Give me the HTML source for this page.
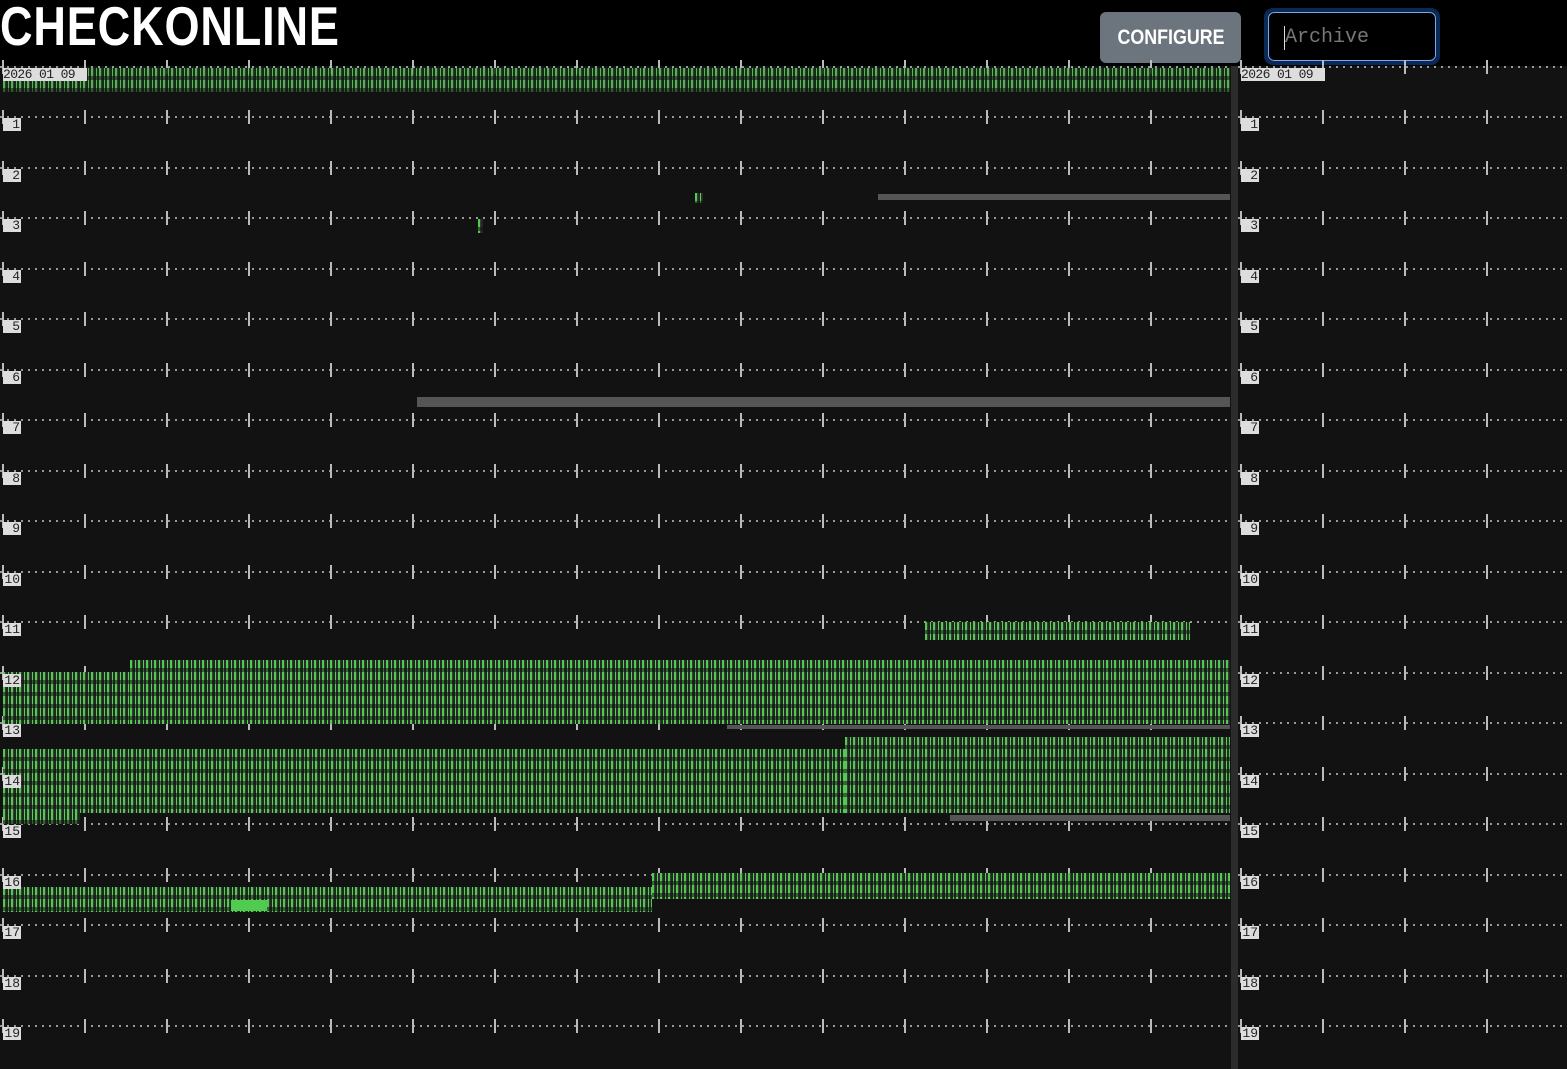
<!DOCTYPE html>
<html><head><meta charset="utf-8"><style>
*{margin:0;padding:0;box-sizing:border-box}
body{width:1567px;height:1069px;background:#000;position:relative;overflow:hidden;font-family:"Liberation Mono",monospace}
#title{position:absolute;left:0;top:-6px;font:bold 55px "Liberation Sans",sans-serif;color:#fff;transform:scaleX(0.82);transform-origin:0 0;letter-spacing:1px}
#cfg{position:absolute;left:1100px;top:12px;width:141px;height:51px;background:#6c757d;border-radius:6px;color:#fff;font:bold 21px "Liberation Sans",sans-serif;text-align:center;line-height:51px}
#cfg span{display:inline-block;transform:scaleX(0.85)}
#arc{position:absolute;left:1264px;top:8px;width:176px;height:57px;border:4px solid #0a2a55;border-radius:9px}
#arc div{position:absolute;inset:0;border:1.5px solid #7aa7ee;border-radius:6px;background:#000;color:#777;font:20px "Liberation Mono",monospace;padding:13px 0 0 16px}
#arc span{position:absolute;left:16px;top:14px;width:1px;height:24px;background:#ddd}
#L{position:absolute;left:0;top:66px;width:1231px;height:1003px;background:#121212}
#D{position:absolute;left:1231px;top:66px;width:7px;height:1003px;background:#2c2c2c}
#R{position:absolute;left:1238px;top:66px;width:329px;height:1003px;background:#121212}
.r{position:absolute;left:0;width:100%;height:14px;
background:linear-gradient(90deg,#bbb 0 2px,transparent 2px) 2px 0/82px 14px repeat-x,
linear-gradient(90deg,#999 0 2px,transparent 2px) 0 6px/7px 2px repeat-x}
.lb{position:absolute;left:3px;width:18px;height:13px;background:#ddd;color:#222;font-size:13px;line-height:13px;text-align:right;padding-right:1px}
.dt{position:absolute;left:3px;top:2px;width:84px;height:13px;background:#ddd;color:#222;font-size:13px;line-height:13px;white-space:nowrap;letter-spacing:-0.6px}
.g{position:absolute;background:
linear-gradient(180deg,transparent 0 8px,rgba(18,18,18,.55) 8px 12px) 0 0/100% 12px,
repeating-linear-gradient(90deg,#4fcc4f 0 2px,#3a3a3a 2px 3px,#1d2a1d 3px 5px,#55d055 5px 6px,#2a2a2a 6px 8px)}
.gb{position:absolute;background:#555}
</style></head><body>
<div id="title">CHECKONLINE</div>
<div id="cfg"><span>CONFIGURE</span></div>
<div id="arc"><div>Archive</div><span></span></div>
<div id="L">
<div class="r" style="top:-6px"></div>
<div class="r" style="top:44px"></div><div class="r" style="top:95px"></div><div class="r" style="top:145px"></div><div class="r" style="top:196px"></div><div class="r" style="top:246px"></div><div class="r" style="top:297px"></div><div class="r" style="top:347px"></div><div class="r" style="top:398px"></div><div class="r" style="top:448px"></div><div class="r" style="top:499px"></div><div class="r" style="top:549px"></div><div class="r" style="top:600px"></div><div class="r" style="top:650px"></div><div class="r" style="top:701px"></div><div class="r" style="top:751px"></div><div class="r" style="top:802px"></div><div class="r" style="top:852px"></div><div class="r" style="top:903px"></div><div class="r" style="top:953px"></div>
<div class="g" style="left:3px;top:2px;width:1227px;height:24px;opacity:.9"></div>
<div class="gb" style="left:878px;top:128px;width:352px;height:6px"></div>
<div class="gb" style="left:417px;top:331px;width:813px;height:10px"></div>
<div class="gb" style="left:727px;top:659px;width:503px;height:4px"></div>
<div class="gb" style="left:950px;top:749px;width:280px;height:6px"></div>
<div class="g" style="left:478px;top:153px;width:5px;height:14px"></div>
<div class="g" style="left:695px;top:127px;width:8px;height:10px"></div>
<div class="g" style="left:925px;top:556px;width:265px;height:18px"></div>
<div class="g" style="left:130px;top:594px;width:1100px;height:64px"></div>
<div class="g" style="left:3px;top:606px;width:127px;height:52px"></div>
<div class="g" style="left:845px;top:671px;width:385px;height:76px"></div>
<div class="g" style="left:3px;top:683px;width:842px;height:64px"></div>
<div class="g" style="left:3px;top:746px;width:77px;height:12px"></div>
<div class="g" style="left:652px;top:807px;width:578px;height:26px"></div>
<div class="g" style="left:3px;top:821px;width:649px;height:25px"></div>
<div style="position:absolute;left:231px;top:834px;width:36px;height:11px;background:#4fcc4f"></div>
<div class="dt">2026 01 09</div>
<div class="lb" style="top:52px">1</div><div class="lb" style="top:103px">2</div><div class="lb" style="top:153px">3</div><div class="lb" style="top:204px">4</div><div class="lb" style="top:254px">5</div><div class="lb" style="top:305px">6</div><div class="lb" style="top:355px">7</div><div class="lb" style="top:406px">8</div><div class="lb" style="top:456px">9</div><div class="lb" style="top:507px">10</div><div class="lb" style="top:557px">11</div><div class="lb" style="top:608px">12</div><div class="lb" style="top:658px">13</div><div class="lb" style="top:709px">14</div><div class="lb" style="top:759px">15</div><div class="lb" style="top:810px">16</div><div class="lb" style="top:860px">17</div><div class="lb" style="top:911px">18</div><div class="lb" style="top:961px">19</div>
</div>
<div id="D"></div>
<div id="R">
<div class="r" style="top:-6px"></div>
<div class="r" style="top:44px"></div><div class="r" style="top:95px"></div><div class="r" style="top:145px"></div><div class="r" style="top:196px"></div><div class="r" style="top:246px"></div><div class="r" style="top:297px"></div><div class="r" style="top:347px"></div><div class="r" style="top:398px"></div><div class="r" style="top:448px"></div><div class="r" style="top:499px"></div><div class="r" style="top:549px"></div><div class="r" style="top:600px"></div><div class="r" style="top:650px"></div><div class="r" style="top:701px"></div><div class="r" style="top:751px"></div><div class="r" style="top:802px"></div><div class="r" style="top:852px"></div><div class="r" style="top:903px"></div><div class="r" style="top:953px"></div>
<div class="dt">2026 01 09</div>
<div class="lb" style="top:52px">1</div><div class="lb" style="top:103px">2</div><div class="lb" style="top:153px">3</div><div class="lb" style="top:204px">4</div><div class="lb" style="top:254px">5</div><div class="lb" style="top:305px">6</div><div class="lb" style="top:355px">7</div><div class="lb" style="top:406px">8</div><div class="lb" style="top:456px">9</div><div class="lb" style="top:507px">10</div><div class="lb" style="top:557px">11</div><div class="lb" style="top:608px">12</div><div class="lb" style="top:658px">13</div><div class="lb" style="top:709px">14</div><div class="lb" style="top:759px">15</div><div class="lb" style="top:810px">16</div><div class="lb" style="top:860px">17</div><div class="lb" style="top:911px">18</div><div class="lb" style="top:961px">19</div>
</div>
</body></html>
